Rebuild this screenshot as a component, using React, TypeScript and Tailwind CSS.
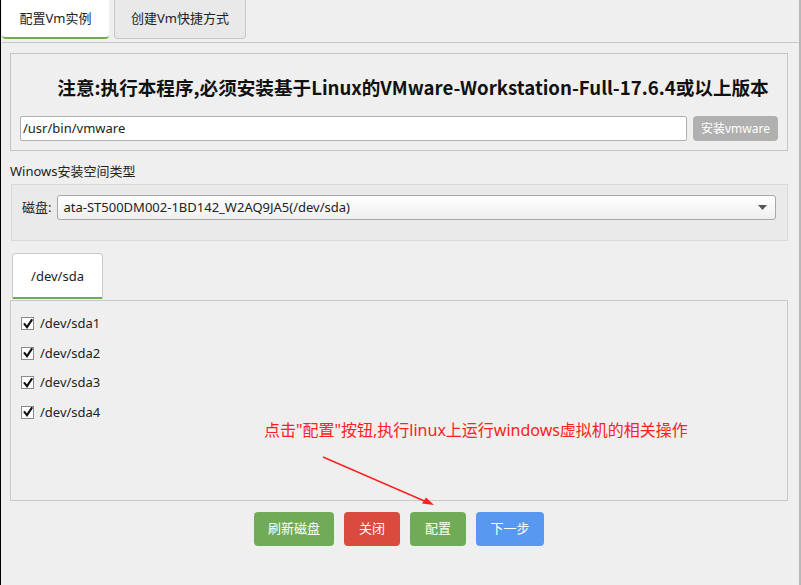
import React from "react";

const font = { fontFamily: '"Noto Sans", "Noto Sans CJK SC", sans-serif' };

function Check() {
  return (
    <span className="flex h-[13px] w-[13px] items-center justify-center border border-[#8a8a8a] bg-white">
      <svg width="10" height="10" viewBox="0 0 10 10">
        <path d="M1.6 5.2 L4 8.2 L8.6 1.2" fill="none" stroke="#111" strokeWidth="2.1" strokeLinecap="square" />
      </svg>
    </span>
  );
}

export default function App() {
  const parts = ["/dev/sda1", "/dev/sda2", "/dev/sda3", "/dev/sda4"];
  return (
    <div
      className="relative flex h-[585px] w-[801px] flex-col overflow-hidden border-l border-r-2 border-l-black border-r-[#b8b8b8] bg-[#efefef] text-[13px] text-[#222]"
      style={font}
    >
      <div className="absolute right-[-2px] top-0 h-[14px] w-[2px] bg-[#c4572f]" />

      {/* tab bar */}
      <div className="flex h-[43px] shrink-0 items-start gap-[5px] border-b border-[#c9c9c9] pl-[1px]">
        <div className="flex h-[39px] w-[107px] items-center justify-center rounded-b-[4px] border-b-2 border-[#6fae4f] bg-white">
          配置Vm实例
        </div>
        <div className="flex h-[39px] w-[132px] items-center justify-center rounded-b-[4px] border border-t-0 border-[#c8c8c8] bg-[#e9e9e9]">
          创建Vm快捷方式
        </div>
      </div>

      <div className="flex flex-col pl-[9px] pr-[11px]">
        {/* warning panel */}
        <div className="mt-[10px] flex h-[98px] flex-col border border-[#c4c4c4] px-[9px]">
          <div
            className="mt-[19px] pl-[28px] text-center text-[18.6px] font-bold leading-[28px] text-[#111]"
            style={{ fontFamily: '"Noto Sans CJK SC", "Noto Sans", sans-serif' }}
          >
            注意:执行本程序,必须安装基于Linux的VMware-Workstation-Full-17.6.4或以上版本
          </div>
          <div className="mt-[15px] flex gap-[6px]">
            <div className="flex h-[25px] flex-1 items-center rounded-[2px] border border-[#b0b0b0] bg-white pl-[2px]">
              /usr/bin/vmware
            </div>
            <div className="flex h-[25px] w-[85px] items-center justify-center rounded-[4px] bg-[#b0b0b0] text-[12px] text-white">
              安装vmware
            </div>
          </div>
        </div>

        <div className="mt-[11px] leading-[18px]">Winows安装空间类型</div>

        <div className="ml-[1px] mt-[4px] flex h-[57px] items-start border border-[#d9d9d9] bg-[#eaeaea] pl-[10px] pr-[11px] pt-[10px]">
          <div className="flex h-[25px] items-center pr-[6px]">磁盘:</div>
          <div className="flex h-[25px] flex-1 items-center justify-between rounded-[3px] border border-[#a9a9a9] bg-gradient-to-b from-white to-[#efefef] pl-[5px] pr-[8px]">
            <span>ata-ST500DM002-1BD142_W2AQ9JA5(/dev/sda)</span>
            <svg width="9" height="5" viewBox="0 0 9 5">
              <path d="M0 0 H9 L4.5 5 Z" fill="#555" />
            </svg>
          </div>
        </div>

        <div className="ml-[2px] mt-[12px] flex h-[46px] w-[91px] items-center justify-center rounded-t-[4px] border border-b-0 border-[#cccccc] bg-white shadow-[inset_0_-2px_0_#6fae4f]">
          /dev/sda
        </div>

        <div className="mt-[1px] flex h-[201px] flex-col border border-[#c9c9c9] pl-[10px] pt-[8px]">
          {parts.map((p) => (
            <div key={p} className="flex h-[29.5px] items-center gap-[6px]">
              <Check />
              <span>{p}</span>
            </div>
          ))}
        </div>

        <div className="mt-[11px] flex justify-center gap-[10px] text-white">
          <div className="flex h-[34px] w-[80px] items-center justify-center rounded-[4px] bg-[#70ac57]">刷新磁盘</div>
          <div className="flex h-[34px] w-[56px] items-center justify-center rounded-[4px] bg-[#d94b3e]">关闭</div>
          <div className="flex h-[34px] w-[56px] items-center justify-center rounded-[4px] bg-[#70ac57]">配置</div>
          <div className="flex h-[34px] w-[68px] items-center justify-center rounded-[4px] bg-[#5898f0]">下一步</div>
        </div>
      </div>

      {/* annotation overlay */}
      <div className="absolute left-[263px] top-[418px] text-[16px] leading-[24px] text-[#ff2020]">
        点击"配置"按钮,执行linux上运行windows虚拟机的相关操作
      </div>
      <svg className="absolute left-0 top-0" width="801" height="585" viewBox="0 0 801 585">
        <line x1="322" y1="457" x2="428" y2="503" stroke="#ff2020" strokeWidth="1.4" />
        <path d="M433 505 L421 503.5 L425 497.5 Z" fill="#ff2020" />
      </svg>
    </div>
  );
}
